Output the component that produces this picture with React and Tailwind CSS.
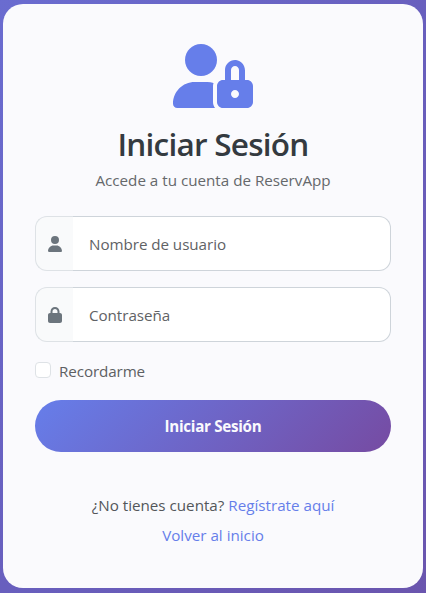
import { FaUser, FaLock } from "react-icons/fa6";

function UserLock({ className }) {
  return (
    <svg viewBox="0 0 640 512" fill="currentColor" className={className}>
      <path d="M224 256c70.7 0 128-57.31 128-128S294.7 0 224 0S96 57.31 96 128S153.3 256 224 256z" />
      <path d="M320 336c0-8.672 1.738-16.87 4.303-24.7C308.6 306.6 291.9 304 274.7 304H173.3C77.61 304 0 381.7 0 477.4C0 496.5 15.52 512 34.66 512h301.7C326.3 498.6 320 482.1 320 464V336z" />
      <path
        fillRule="evenodd"
        d="M592 288H576V212.7c0-41.84-30.02-80.04-71.66-84.27C456.5 123.6 416 161.1 416 208V288h-16C373.6 288 352 309.6 352 336v128c0 26.4 21.6 48 48 48h192c26.4 0 48-21.6 48-48v-128C640 309.6 618.4 288 592 288zM496 432c-17.62 0-32-14.38-32-32s14.38-32 32-32s32 14.38 32 32S513.6 432 496 432zM528 288h-64V208c0-17.62 14.38-32 32-32s32 14.38 32 32V288z"
      />
    </svg>
  );
}

function Field({ icon: Icon, type, label }) {
  return (
    <div className="flex h-[55px]">
      <span className="flex w-[38px] items-center justify-center rounded-l-[12px] border border-r-0 border-[#dee2e6] bg-[#f8f9fa]/50 pl-px text-[#6c757d]">
        <Icon className="h-4 w-[14px]" />
      </span>
      <input
        type={type}
        placeholder={label}
        className="min-w-0 flex-1 rounded-r-[12px] border border-l-0 border-[#ced4da] bg-white px-4 pt-[2px] text-[15.2px] tracking-[-0.05px] text-[#212529] outline-none placeholder:text-[#5f6265]"
      />
    </div>
  );
}

export default function App() {
  return (
    <div className="h-[593px] w-[426px] bg-linear-to-br from-[#6a6cd0] via-[#685fbe] to-[#6a55ae] px-[3px] pt-1 font-['Open_Sans','Noto_Sans',sans-serif]">
      <main className="flex h-[584px] flex-col rounded-[20px] bg-[#fafafd] px-8 pt-10 text-[15.2px]">
        <header className="flex flex-col items-center">
          <UserLock className="h-16 w-20 text-[#667eea]" />
          <h1 className="mt-[15px] h-[42px] text-[31.5px] leading-[42px] font-semibold tracking-[-0.75px] whitespace-nowrap text-[#343a40]">
            Iniciar Sesión
          </h1>
          <p className="mt-[3px] h-6 leading-6 whitespace-nowrap text-[#65686b]">
            Accede a tu cuenta de ReservApp
          </p>
        </header>
        <form className="mt-6 flex flex-col">
          <Field icon={FaUser} type="text" label="Nombre de usuario" />
          <div className="h-4" />
          <Field icon={FaLock} type="password" label="Contraseña" />
          <label className="mt-[17px] flex h-6 items-center leading-6 tracking-[-0.1px] text-[#5d6063]">
            <input
              type="checkbox"
              className="mr-2 mb-[3px] size-4 appearance-none rounded-[4px] border border-[#dee2e6] bg-white"
            />
            Recordarme
          </label>
          <button
            type="button"
            className="mt-[17px] h-[52px] rounded-full bg-[linear-gradient(135deg,#667eea_0%,#764ba2_100%)] pt-px text-[15.2px] font-bold tracking-[-0.3px] text-[#fafafd]"
          >
            Iniciar Sesión
          </button>
        </form>
        <footer className="mt-[41px] flex flex-col items-center gap-[6px] leading-6 whitespace-nowrap">
          <p className="text-[#53565a]">
            ¿No tienes cuenta? <a className="text-[#667eea]">Regístrate aquí</a>
          </p>
          <a className="text-[#667eea]">Volver al inicio</a>
        </footer>
      </main>
    </div>
  );
}
